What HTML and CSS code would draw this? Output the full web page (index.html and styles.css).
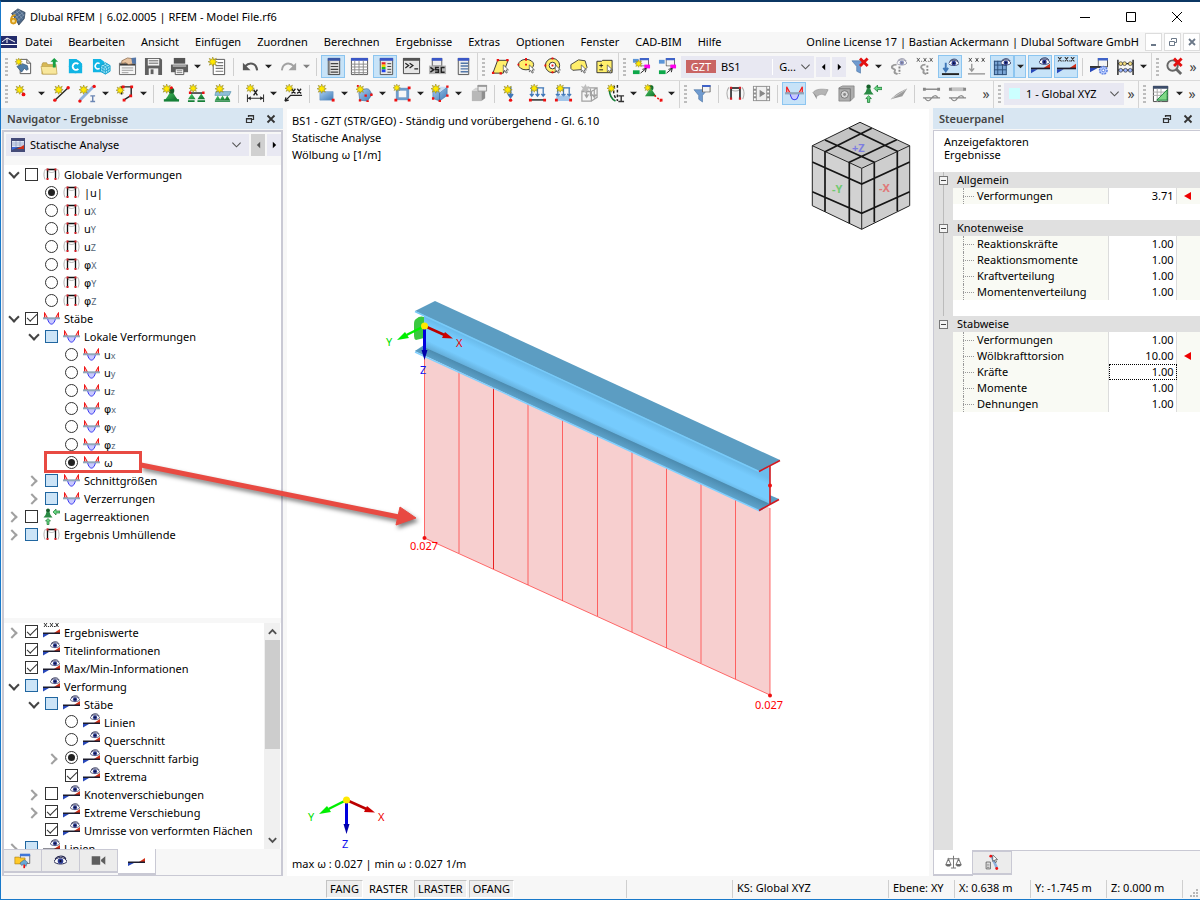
FILE: index.html
```html
<!DOCTYPE html>
<html lang="de">
<head>
<meta charset="utf-8">
<title>Dlubal RFEM | 6.02.0005 | RFEM - Model File.rf6</title>
<link rel="stylesheet" href="styles.css">
</head>
<body>
<svg class="defs" aria-hidden="true">
<defs>
<linearGradient id="blue" x1="0" y1="0" x2="1" y2="1"><stop offset="0" stop-color="#a9cdf0"/><stop offset="1" stop-color="#3f7cb8"/></linearGradient>
<linearGradient id="green" x1="0" y1="0" x2="1" y2="1"><stop offset="0" stop-color="#4fd06a"/><stop offset="1" stop-color="#0c6a27"/></linearGradient>
<linearGradient id="web" gradientUnits="userSpaceOnUse" x1="424" y1="317" x2="410" y2="347"><stop offset="0" stop-color="#6bbcec"/><stop offset=".2" stop-color="#76cbfd"/><stop offset=".6" stop-color="#76cbfd"/><stop offset=".8" stop-color="#65b0dc"/><stop offset="1" stop-color="#4d8cb0"/></linearGradient>
<linearGradient id="flange" gradientUnits="userSpaceOnUse" x1="424" y1="346" x2="419" y2="357"><stop offset="0" stop-color="#4a89ad"/><stop offset="1" stop-color="#62a9d2"/></linearGradient>
</defs>
<symbol id="star" viewBox="0 0 10 10"><path d="M5 0l1 2.800 2.800-1.400L7.400 4.200 10 5 7.400 6 8.700 8.600 6 7.300 5 10 4 7.300 1.300 8.600 2.600 6 0 5l2.600-.8L1.300 1.400 4 2.800z" fill="#ffe800" stroke="#8c7f28" stroke-width=".6"/></symbol>
<symbol id="eye" viewBox="0 0 12 10"><path d="M0 6C2 1 10 1 12 6 10 9 2 9 0 6z" fill="#fff" stroke="#22244e" stroke-width=".9"/><circle cx="6" cy="5.500" r="2.600" fill="#2b3a92"/><circle cx="6" cy="5.500" r="1" fill="#0a0a28"/><path d="M1 3.500C4 0 9 0 11 3.500" fill="none" stroke="#22244e"/></symbol>
<symbol id="cursor" viewBox="0 0 8 11"><path d="M1 0v8.500l2-1.700L4.400 10l1.500-.7L4.600 6.200l2.600-.1z" fill="#fff" stroke="#333" stroke-width=".8"/></symbol>
<symbol id="win" viewBox="0 0 10 9"><path d="M.5.500h9v8h-9z" fill="#f4f4f4" stroke="#555"/><path d="M0 0h10v2.500H0z" fill="#3f63c8"/></symbol>

<symbol id="t-frame" viewBox="0 0 17 17"><path d="M2.500 3C.5 6 .5 10 2 13.500M14.500 3c2 3 2 7 .5 10.500M4.500 5c3 2 5 2 8 0" fill="none" stroke="#aaa" stroke-width=".9"/><path d="M4.500 13V3.500h8V13" fill="none" stroke="#111" stroke-width="1.300"/><path d="M3.500 2.500h2v2h-2zM11.500 2.500h2v2h-2zM3.500 12h2v2h-2zM11.500 12h2v2h-2z" fill="#d11c24"/></symbol>
<symbol id="t-member" viewBox="0 0 17 17"><path d="M1.500 8V2.500L4.500 8zM15.500 8V2.500L12.500 8z" fill="#ffb0b0" stroke="#f01818"/><path d="M4.500 8.500c1.500 7.500 6.500 7.500 8 0z" fill="#c8c8ff" stroke="#3a3af0"/><path d="M0 7.300h17v2H0z" fill="#8fa6bb"/></symbol>
<symbol id="t-react" viewBox="0 0 17 17"><circle cx="5" cy="2.500" r="2" fill="#16602a"/><path d="M3.500 4h3l1 3 2 2.500h-9l2-2.500z" fill="#2a8a44"/><path d="M10 4l3-3v2h4v2h-4v2zM5 10.500l2.500 2.500H6v3.500H4V13H2.500z" fill="#69d884" stroke="#1c7a34" stroke-width=".7"/></symbol>
<symbol id="t-wedge" viewBox="0 0 17 17"><path d="M0 10h6l-6 3z" fill="#2747b8"/><path d="M11 9l6-4v4z" fill="#d22f17"/><path d="M0 8.500h17v1.500H0z" fill="#1c1c2c"/></symbol>
<symbol id="t-eye" viewBox="0 0 17 17"><path d="M0 11h6l-6 3.500z" fill="#2747b8"/><path d="M11 10l6-4v4z" fill="#d22f17"/><path d="M0 9.500h17V11H0z" fill="#1c1c2c"/><use href="#eye" x="7" y="0" width="10" height="8"/></symbol>
<symbol id="t-xxx" viewBox="0 0 17 17"><path d="M0 11h6l-6 3.500z" fill="#2747b8"/><path d="M11 10l6-4v4z" fill="#d22f17"/><path d="M0 9.500h17V11H0z" fill="#1c1c2c"/><path d="M1 0l3 4M4 0L1 4M7 0l3 4M10 0L7 4M12.500 0l3 4M15.500 0l-3 4M5 3.500h1M11 3.500h1" stroke="#333"/></symbol>

<symbol id="i-new" viewBox="0 0 20 20"><path d="M6.500 2.500h7l4 4v11h-11z" fill="#fff" stroke="#555"/><path d="M13.500 2.500v4h4" fill="none" stroke="#555"/><path d="M3 10l6-3 5 2 1 4-2 1-2-2-3 4z" fill="#4f7da8" stroke="#27466a" stroke-width=".6"/><use href="#star" x="1" y="1" width="8" height="8"/></symbol>
<symbol id="i-open" viewBox="0 0 20 20"><path d="M2 8l1-2h4l1 2h9v10H2z" fill="#d8b956" stroke="#a68a36" stroke-width=".6"/><path d="M1 10h16l1 8H3z" fill="#f8e79c" stroke="#b99c45" stroke-width=".6"/><path d="M15 1l4 4h-2.500v6h-3V5H11z" fill="#17a045"/></symbol>
<symbol id="i-center" viewBox="0 0 20 20"><path d="M3 2h8l6 5v10H3z" fill="#11b5e4"/><circle cx="10" cy="10" r="7" fill="#11b5e4"/><path d="M13 7.500a3.500 3.500 0 1 0 0 5" fill="none" stroke="#fff" stroke-width="2"/></symbol>
<symbol id="i-block" viewBox="0 0 20 20"><path d="M1 2h8l4 3v11H1z" fill="#11b5e4"/><path d="M8 7a3 3 0 1 0 0 5" fill="none" stroke="#fff" stroke-width="1.600"/><path d="M14 6l5 3v6l-5 3-5-3V9z" fill="#9be2f6" stroke="#0a9dcc"/><path d="M9 9l5 3 5-3M14 12v6M9 12l5 3 5-3M11.500 7.500l5 3v6M16.500 7.500l-5 3v6" fill="none" stroke="#0a9dcc" stroke-width=".8"/></symbol>
<symbol id="i-props" viewBox="0 0 20 20"><path d="M1.500 6.500h17v12h-17z" fill="#f5f5f5" stroke="#666"/><path d="M2 7h16v2H2z" fill="#3a3a3a"/><path d="M4 11.500h12M4 14h12M4 16.500h7" stroke="#9a9a9a"/><path d="M4 4l6-3 7 1v5l-6 1-3-2-4 1z" fill="#e7c3a0" stroke="#7d5a3c" stroke-width=".7"/><path d="M14 1l5-.5V7l-4 0z" fill="#5577a8"/></symbol>
<symbol id="i-save" viewBox="0 0 20 20"><path d="M1 1h16l2 2v16H1z" fill="#606060"/><path d="M4 2h12v7H4z" fill="#f2f2f2"/><path d="M5 4h10M5 6.500h10" stroke="#606060"/><path d="M5 12h10v7H5z" fill="#f2f2f2"/><path d="M7 13h3v5H7z" fill="#606060"/></symbol>
<symbol id="i-print" viewBox="0 0 20 20"><path d="M4 1h12v6H4z" fill="#555"/><path d="M1 8h18v8H1z" fill="#5e5e5e"/><path d="M5.500 12.500h9v6h-9z" fill="#fff" stroke="#555"/><path d="M7 14.500h6M7 16.500h6" stroke="#777"/><path d="M3 9.500h14" stroke="#e6e6e6"/></symbol>
<symbol id="i-report" viewBox="0 0 20 20"><path d="M5.500 2.500h12v16h-12z" fill="#fff" stroke="#555"/><path d="M10 6h6M8 9h8M8 12h8M8 15h8" stroke="#777" stroke-width="1.300"/><use href="#star" x="0" y="0" width="10" height="10"/></symbol>
<symbol id="i-undo" viewBox="0 0 20 20"><path d="M4 10c5-5 12-4 13 4" fill="none" stroke="#585858" stroke-width="2.200"/><path d="M2 6v8h8z" fill="#585858"/></symbol>
<symbol id="i-redo" viewBox="0 0 20 20"><path d="M16 10C11 5 4 6 3 14" fill="none" stroke="#a2a2a2" stroke-width="2"/><path d="M18 6v8h-8z" fill="#a2a2a2"/></symbol>
<symbol id="i-nav" viewBox="0 0 20 20"><path d="M4.500 1.500h12v17h-12z" fill="#e0e0e0" stroke="#444"/><path d="M4 1h13v3H4z" fill="#3b57a6"/><path d="M7 7h8M7 10h8M7 13h8M7 16h8" stroke="#444" stroke-width="1.300"/><path d="M5 4h1.500v14H5z" fill="#999"/></symbol>
<symbol id="i-table" viewBox="0 0 20 20"><path d="M1.500 1.500h17v17h-17z" fill="#fff" stroke="#555"/><path d="M1 1h18v3H1z" fill="#3b57c6"/><path d="M1 7.500h18M1 10.500h18M1 13.500h18M1 16.500h18M5 4v15M9.500 4v15M14 4v15" stroke="#8a8a8a"/></symbol>
<symbol id="i-panel" viewBox="0 0 20 20"><path d="M4.500 1.500h13v17h-13z" fill="#e6e6e6" stroke="#555"/><path d="M4 1h14v3H4z" fill="#3b57c6"/><path d="M6 5.500h4v2.500H6z" fill="#e22"/><path d="M6 8h4v2.500H6z" fill="#f4d000"/><path d="M6 10.500h4V13H6z" fill="#2b2"/><path d="M6 13h4v3H6z" fill="#24e"/><path d="M12 7h4M12 10h4M12 13h4M12 16h4" stroke="#444"/></symbol>
<symbol id="i-term" viewBox="0 0 20 20"><path d="M1.500 1.500h17v16h-17z" fill="#e5e5e5" stroke="#444"/><path d="M1 1h18v3H1z" fill="#555"/><path d="M3.500 6.500L7 9l-3.500 2.500M8 6.500L11.500 9 8 11.500M13 12.500h4" fill="none" stroke="#222" stroke-width="1.300"/></symbol>
<symbol id="i-sc" viewBox="0 0 20 20"><path d="M4.500 1.500h10v8h-10z" fill="#eee" stroke="#555"/><path d="M4 1h11v3H4z" fill="#3b57c6"/><path d="M1 9h18v9H1z" fill="#b5b5b5"/><path d="M2.500 11l3.500 2.500L2.500 16M11.500 11H8v2.500h3V16H7.500M17.500 11H14v5h3.500" fill="none" stroke="#222" stroke-width="1.500"/></symbol>
<symbol id="i-list" viewBox="0 0 20 20"><path d="M4.500 1.500h11v17h-11z" fill="#eee" stroke="#555"/><path d="M4 1h12v3H4z" fill="#3b57c6"/><path d="M7 6.500h8M7 9.500h8M7 12.500h8M7 15.500h8" stroke="#5276a8" stroke-width="1.500"/></symbol>
<symbol id="i-sel1" viewBox="0 0 20 20"><path d="M7 3.500h11L13 17H2z" fill="#ffef6b" stroke="#333"/><path d="M6 2h2.500v2.500H6zM16 2h2.500v2.500H16zM1 15.500h2.500V18H1zM9 16h2.500v2.500H9z" fill="#e11"/><use href="#cursor" x="12" y="8" width="7" height="10"/></symbol>
<symbol id="i-sel2" viewBox="0 0 20 20"><ellipse cx="9.500" cy="8" rx="8" ry="5.500" fill="#ffef6b" stroke="#333"/><path d="M8.500 1h2v3h-2zM.5 7h2v2h-2zM8.500 7h2v2h-2z" fill="#e11"/><use href="#cursor" x="12" y="8" width="7" height="10"/></symbol>
<symbol id="i-sel3" viewBox="0 0 20 20"><circle cx="10" cy="9" r="7.500" fill="#ffef6b" stroke="#333"/><circle cx="10" cy="9" r="3.500" fill="#fff" stroke="#333"/><path d="M9 8h2v2H9zM9 .5h2v2H9zM1.500 8h2v2h-2zM9 15h2v2H9z" fill="#e11"/><use href="#cursor" x="12" y="8" width="7" height="10"/></symbol>
<symbol id="i-sel4" viewBox="0 0 20 20"><path d="M2 8l8-5 7 1 2 7-2 2-13 1-2-2z" fill="#ffef6b" stroke="#444"/><use href="#cursor" x="12" y="8" width="7" height="10"/></symbol>
<symbol id="i-sel5" viewBox="0 0 20 20"><path d="M2 4.500h5l1-1h10v13H2z" fill="#ffef6b" stroke="#333"/><path d="M4.500 9h4M6.500 7v4M4.500 13.500h4" stroke="#222"/><use href="#cursor" x="12" y="8" width="7" height="10"/></symbol>
<symbol id="i-lc1" viewBox="0 0 20 20"><use href="#win" x="8" y="1" width="10" height="9"/><path d="M1 2h6v4H1z" fill="#5b95d8"/><path d="M1 14h7v4H1z" fill="#0da84a"/><path d="M13 8h6v4h-6z" fill="#f0e"/><path d="M9 17l6-5M15 12l-4 1M15 12l-1 4" stroke="#222"/><use href="#star" x="3" y="3" width="8" height="8"/></symbol>
<symbol id="i-lc2" viewBox="0 0 20 20"><use href="#win" x="8" y="1" width="10" height="9"/><path d="M1 3h6v4H1z" fill="#5b95d8"/><path d="M1 14h7v4H1z" fill="#0da84a"/><path d="M13 8h6v4h-6z" fill="#f0e"/><path d="M9 17l6-5M15 12l-4 1M15 12l-1 4" stroke="#222"/></symbol>
<symbol id="i-filx" viewBox="0 0 20 20"><path d="M1 4h14l-5 6v7l-4-2v-5z" fill="#6f9bd0" stroke="#466f9f" stroke-width=".6"/><path d="M9.500 1.500l8 8M17.500 1.500l-8 8" stroke="#e31010" stroke-width="3"/></symbol>
<symbol id="i-geye" viewBox="0 0 20 20"><g opacity=".55"><use href="#eye" x="8" y="1" width="11" height="9"/></g><path d="M8 8c-5 0-6 3-4 4s3 1 2 3 1 2 3 3" fill="none" stroke="#999" stroke-width="2"/><path d="M11 10v8" stroke="#888" stroke-width="2" stroke-dasharray="2 1.500"/></symbol>
<symbol id="i-gxxx" viewBox="0 0 20 20"><path d="M2 1l3 4M5 1L2 5M9 1l3 4M12 1L9 5M15.500 1l3 4M18.500 1l-3 4M6.500 4.500h1M13.500 4.500h1" stroke="#555"/><path d="M11 8c-5 0-5 3-4 4s3 1 2 3 1 2 3 3" fill="none" stroke="#999" stroke-width="2"/><path d="M13 9v9" stroke="#888" stroke-width="2" stroke-dasharray="2 1.500"/></symbol>
<symbol id="i-loade" viewBox="0 0 20 20"><path d="M5 6v8M2.500 11.500L5 15l2.500-3.500" fill="none" stroke="#3f77b8" stroke-width="2"/><path d="M1 17h18v2H1z" fill="#222"/><use href="#eye" x="8" y="1" width="11" height="10"/></symbol>
<symbol id="i-loadx" viewBox="0 0 20 20"><path d="M2 1l3 4M5 1L2 5M9 1l3 4M12 1L9 5M15.500 1l3 4M18.500 1l-3 4" stroke="#444"/><path d="M5 7v8M2.500 12L5 15l2.500-3" fill="none" stroke="#999" stroke-width="1.500"/><path d="M1 17h18v1.500H1z" fill="#999"/></symbol>
<symbol id="i-grid" viewBox="0 0 20 20"><path d="M1 4h13v15H1z" fill="#7aa5d5"/><path d="M1 8.500h13M1 13.500h13M5 4v15M10 4v15M1 4.500h13M1.500 4v15M14 4v15M1 18.500h13" stroke="#2c4f7a"/><use href="#eye" x="8" y="1" width="11" height="9"/></symbol>
<symbol id="i-res" viewBox="0 0 20 20"><use href="#win" x="8" y="1" width="11" height="10"/><path d="M0 11h9l-9 5z" fill="#2747b8"/><path d="M0 9.500h12v2H0z" fill="#333"/><circle cx="14" cy="14" r="4" fill="#b8ccff" stroke="#5a7ee0" stroke-width="1.500" stroke-dasharray="2 1"/><circle cx="14" cy="14" r="1.500" fill="#fff" stroke="#5a7ee0"/></symbol>
<symbol id="i-abacus" viewBox="0 0 20 20"><path d="M2 3v16M18 3v16M2 7h16M2 14h16" stroke="#222" stroke-width="1.500"/><g fill="#f4dd80" stroke="#333" stroke-width=".7"><circle cx="5" cy="7" r="2"/><circle cx="9" cy="7" r="2"/><circle cx="15" cy="7" r="2"/></g><g fill="#9ab4ff" stroke="#333" stroke-width=".7"><circle cx="5" cy="14" r="2"/><circle cx="10" cy="14" r="2"/><circle cx="15" cy="14" r="2"/></g></symbol>
<symbol id="i-findx" viewBox="0 0 20 20"><circle cx="8" cy="9" r="5.500" fill="#ececec" stroke="#666" stroke-width="2"/><path d="M12 13l5 5" stroke="#666" stroke-width="3"/><path d="M9.500 1.500l8 8M17.500 1.500l-8 8" stroke="#e31010" stroke-width="3"/></symbol>

<symbol id="i-node" viewBox="0 0 20 20"><use href="#star" x="1" y="1" width="10" height="10"/><circle cx="10" cy="11" r="2" fill="#e11"/></symbol>
<symbol id="i-line" viewBox="0 0 20 20"><path d="M3 17L17 4" stroke="#222" stroke-width="1.500"/><use href="#star" x="2" y="1" width="10" height="10"/><circle cx="17" cy="4" r="1.800" fill="#e11"/><circle cx="3" cy="17" r="1.800" fill="#e11"/></symbol>
<symbol id="i-member" viewBox="0 0 20 20"><path d="M2 17L16 3" stroke="#8fb2dd" stroke-width="3"/><path d="M13 12.500h5M15.500 12.500v6M13 18.500h5" stroke="#6b86b4" stroke-width="1.500"/><use href="#star" x="1" y="1" width="10" height="10"/><circle cx="17" cy="2.500" r="1.800" fill="#e11"/><circle cx="2" cy="18" r="1.800" fill="#e11"/></symbol>
<symbol id="i-poly" viewBox="0 0 20 20"><path d="M8 17l8-5V3H6v8" fill="none" stroke="#222" stroke-width="1.500"/><use href="#star" x="0" y="2" width="9" height="9"/><path d="M6 1.500h3v3H6zM15 1.500h3v3h-3zM14 11h3v3h-3zM7 15.500h3v3H7z" fill="#e11"/></symbol>
<symbol id="i-nsup" viewBox="0 0 20 20"><path d="M11 6l4 7 3 4H4l3-4z" fill="url(#green)"/><path d="M3 16h16v2.500H3z" fill="#168038"/><circle cx="11" cy="7" r="3" fill="#16602a"/><use href="#star" x="1" y="0" width="10" height="10"/><circle cx="11" cy="4" r="1.600" fill="#e11"/></symbol>
<symbol id="i-lsup" viewBox="0 0 20 20"><path d="M5 10l4 6H1zM15 10l4 6h-8z" fill="url(#green)"/><path d="M1 17h7v2H1zM11 17h8v2h-8z" fill="#168038"/><path d="M3 9.500h14" stroke="#222" stroke-width="1.500"/><use href="#star" x="2" y="0" width="9" height="9"/><path d="M2 8h2.500v2.500H2zM16 8h2.500v2.500H16z" fill="#e11"/></symbol>
<symbol id="i-ssup" viewBox="0 0 20 20"><path d="M3 8h16l-2 4H2z" fill="#8fc0d8" stroke="#4a8aa8" stroke-width=".6"/><path d="M5 12l3 5H2zM10 12l3 5H7zM15 12l3 5h-6z" fill="url(#green)"/><path d="M2 18h16" stroke="#168038" stroke-width="1.500"/><use href="#star" x="2" y="0" width="10" height="10"/></symbol>
<symbol id="i-dim" viewBox="0 0 20 20"><path d="M1.500 11v8M18.500 11v8M2 15h16" stroke="#222"/><path d="M2 15l3-2v4zM18 15l-3-2v4z" fill="#222"/><path d="M8 6l4 6M12 6l-4 6" stroke="#222" stroke-width="1.500"/><use href="#star" x="0" y="0" width="9" height="9"/></symbol>
<symbol id="i-dimxx" viewBox="0 0 20 20"><path d="M1 18l6-6h12M1 18l1-4M1 18l4-1" stroke="#222" fill="none" stroke-width="1.300"/><path d="M8 5l4 5M12 5l-4 5M14 5l4 5M18 5l-4 5" stroke="#222" stroke-width="1.300"/><use href="#star" x="1" y="0" width="9" height="9"/></symbol>
<symbol id="i-surf" viewBox="0 0 20 20"><path d="M3 8h14v9H3z" fill="url(#blue)" stroke="#6a95c4" stroke-width=".6"/><use href="#star" x="0" y="0" width="10" height="10"/><path d="M15.500 15.500h3v3h-3z" fill="#e11"/></symbol>
<symbol id="i-surf2" viewBox="0 0 20 20"><path d="M4 9c4-4 9-5 11-3l3 5-5 7-8-1z" fill="url(#blue)" stroke="#34608f" stroke-width=".6"/><use href="#star" x="1" y="1" width="9" height="9"/><path d="M2 1h2v2H2zM10 11h2.500v2.500H10zM16 10h2.500v2.500H16zM4 16h2.500v2.500H4zM12 17h2.500v2H12z" fill="#e11"/></symbol>
<symbol id="i-open2" viewBox="0 0 20 20"><path d="M3 4h14v13H3z" fill="#6e9ccb"/><path d="M6 7h8v7H6z" fill="#f7f7f7"/><path d="M15.500 2.500h3v3h-3zM15.500 15.500h3v3h-3zM1.500 15.500h3v3h-3z" fill="#e11"/><use href="#star" x="0" y="0" width="8" height="8"/></symbol>
<symbol id="i-solid" viewBox="0 0 20 20"><path d="M2 6l7 3v9l-7-3zM9 9l8-6v9l-8 6z" fill="url(#blue)" stroke="#3b6ea5" stroke-width=".6"/><path d="M2 6l8-3h7L9 9z" fill="#c9dff5"/><use href="#star" x="0" y="0" width="10" height="10"/><path d="M8 16.500h2.500V19H8zM1 14h2.500v2.500H1zM16 11h2.500v2.500H16zM16 1.500h2.500V4H16z" fill="#e11"/></symbol>
<symbol id="i-gcube" viewBox="0 0 20 20"><path d="M3 7h10v11H3z" fill="#b8b8b8"/><path d="M13 7l4-3v11l-4 3z" fill="#8e8e8e"/><path d="M3 7l4-3h10l-4 3z" fill="#d2d2d2"/><path d="M9.500 1.500h9v6h-9z" fill="#ececec" stroke="#999"/><path d="M9 1h10v2H9z" fill="#999"/></symbol>
<symbol id="i-nload" viewBox="0 0 20 20"><path d="M9 3v10M6.500 10.500L9 14l2.500-3.500" fill="none" stroke="#3f77b8" stroke-width="2"/><use href="#star" x="1" y="1" width="10" height="10"/><circle cx="9" cy="17" r="1.800" fill="#e11"/></symbol>
<symbol id="i-mload" viewBox="0 0 20 20"><path d="M3 4h14M4 4v9M10 4v9M16 4v9M2 10.500L4 13l2-2.500M8 10.500l2 2.500 2-2.500M14 10.500l2 2.500 2-2.500" fill="none" stroke="#3f77b8" stroke-width="1.300"/><path d="M2 16h16v1.500H2z" fill="#222"/><path d="M1 15.500h3v3H1zM16 15.500h3v3h-3z" fill="#e11"/><use href="#star" x="2" y="0" width="9" height="9"/></symbol>
<symbol id="i-sload" viewBox="0 0 20 20"><path d="M3 4h14M4 4v9M10 4v9M16 4v9M2 10.500L4 13l2-2.500M8 10.500l2 2.500 2-2.500M14 10.500l2 2.500 2-2.500" fill="none" stroke="#3f77b8" stroke-width="1.300"/><path d="M3 12h13l2 6H1z" fill="#8db9e6" opacity=".8"/><path d="M1 15.500h3v3H1zM16 15.500h3v3h-3z" fill="#e11"/><use href="#star" x="2" y="0" width="9" height="9"/></symbol>
<symbol id="i-gload" viewBox="0 0 20 20"><path d="M2 8h10v10H2zM2 8l5-4h11v10l-6 4M12 8l6-4M7 5v8M11 5v8M15 5v8M5 11l2 3 2-3M13 11l2 3 2-3" fill="none" stroke="#a2a2a2" stroke-width="1.300"/><path d="M6 0l1 3 3-1-2 3 2 2-3 0-1 3-2-3-3 0 2-2-2-3 3 1z" fill="#bdbdbd"/></symbol>
<symbol id="i-imp" viewBox="0 0 20 20"><path d="M4 5c-1 6 2 11 6 13" fill="none" stroke="#168038" stroke-width="1.800"/><path d="M9 2c-2 5-1 11 3 15M12 1v17" fill="none" stroke="#222" stroke-width="1.500" stroke-dasharray="3 2"/><path d="M13 12.500h6M16 12.500v6M13 18.500h6" stroke="#333" stroke-width="1.500"/><use href="#star" x="1" y="0" width="9" height="9"/></symbol>
<symbol id="i-free" viewBox="0 0 20 20"><circle cx="7" cy="4" r="3" fill="#16702e"/><path d="M7 4l4 6 2 3H1l2-3z" fill="url(#green)"/><path d="M11 12l7 6" stroke="#e11" stroke-width="1.500" stroke-dasharray="2 2"/><path d="M16.500 15.500h3v3h-3z" fill="#e11"/><use href="#star" x="0" y="0" width="8" height="8"/></symbol>
<symbol id="i-filw" viewBox="0 0 20 20"><path d="M1 6h14l-5 6v7l-4-3v-4z" fill="#6f9bd0" stroke="#466f9f" stroke-width=".6"/><use href="#win" x="9" y="1" width="10" height="8"/></symbol>
<symbol id="i-film" viewBox="0 0 20 20"><path d="M1 2h18v16H1z" fill="#8f8f8f"/><path d="M5 3h10v14H5z" fill="#f0f0f0"/><path d="M8 6l6 4-6 4z" fill="#888"/><path d="M3 3v14M17 3v14" stroke="#fff" stroke-width="2" stroke-dasharray="2 2"/></symbol>
<symbol id="i-gsurf" viewBox="0 0 20 20"><path d="M2 9c3-4 9-4 16-3l-3 6c-4-2-6-1-9 1z" fill="#b4b4b4" stroke="#888" stroke-width=".6"/><path d="M2 9l4 4v3z" fill="#888"/></symbol>
<symbol id="i-gsolid" viewBox="0 0 20 20"><path d="M2 4l4-2h12v12l-4 4H2z" fill="#adadad" stroke="#777" stroke-width=".7"/><path d="M2 5h12v13" fill="none" stroke="#777"/><circle cx="8" cy="11" r="4" fill="#d8d8d8" stroke="#777"/><circle cx="8" cy="11" r="1.500" fill="#888"/></symbol>
<symbol id="i-gwing" viewBox="0 0 20 20"><path d="M2 16c5-5 9-8 17-11l-5 8z" fill="#9a9a9a"/><path d="M2 16L19 5" stroke="#c9c9c9"/></symbol>
<symbol id="i-wave1" viewBox="0 0 20 20"><path d="M2 5.500h16" stroke="#888" stroke-width="1.500"/><path d="M1 4h3v3H1zM16 4h3v3h-3z" fill="#888"/><path d="M1 14.500h18M3 15c3 4 5 3 7 0s5-4 7 0" fill="none" stroke="#888" stroke-width="1.300"/></symbol>
<symbol id="i-wave2" viewBox="0 0 20 20"><path d="M3 3.500h14v4H3z" fill="#c4c4c4"/><path d="M1 4h3v3H1zM16 4h3v3h-3z" fill="#888"/><path d="M1 14.500h18M3 15c3 4 5 3 7 0s5-4 7 0" fill="none" stroke="#888" stroke-width="1.300"/></symbol>
<symbol id="i-scale" viewBox="0 0 20 20"><path d="M1.500 2.500h15v16h-15z" fill="#fff" stroke="#444"/><path d="M1 2h16v3H1z" fill="#3c4d6a"/><path d="M1 8.500h16M1 12h16M5.500 5v14M9.500 5v14" stroke="#aaa"/><path d="M16 6v11H5z" fill="#7fd886" stroke="#168038"/></symbol>
<symbol id="i-balance" viewBox="0 0 20 20"><path d="M10 2v14M3 5.500h14M7 16.500h6M4 5.500l-3 7h6zM16 5.500l-3 7h6z" fill="none" stroke="#777" stroke-width="1.200"/><path d="M1 12.500h6c0 3-6 3-6 0zM13 12.500h6c0 3-6 3-6 0z" fill="#666"/></symbol>
<symbol id="i-pick" viewBox="0 0 20 20"><path d="M9 3l6 13" stroke="#8fb2dd" stroke-width="3"/><path d="M2.500 9.500h5v8h-5z" fill="#fff" stroke="#555"/><path d="M3.500 12h3M3.500 14h3M3.500 16h3" stroke="#777"/><circle cx="8" cy="2.500" r="1.700" fill="#e11"/><circle cx="15" cy="17" r="1.700" fill="#e11"/><use href="#cursor" x="9" y="1" width="8" height="10"/></symbol>
<symbol id="i-cam" viewBox="0 0 20 20"><path d="M2 5h10v10H2zM13 9l5-4v10l-5-4z" fill="#5e5e5e"/></symbol>
<symbol id="i-data" viewBox="0 0 20 20"><path d="M7.500 3.500h11v10h-11z" fill="#eee" stroke="#666"/><path d="M7 2h12v3H7z" fill="#3f76d8"/><path d="M1 6h5l1 1h6v7H1z" fill="#ffc928" stroke="#a57a12" stroke-width=".7"/><path d="M7 13l5-4 4 3-2 5-2-3-3 2z" fill="#68a8d8" stroke="#27466a" stroke-width=".5"/><path d="M11 15h2v4h-2z" fill="#e11"/></symbol>
<symbol id="i-logo" viewBox="0 0 20 20"><path d="M4 6l7-5 8 4-1 7-6 7-3-6z" fill="#4d6888" stroke="#26384f" stroke-width=".8"/><path d="M6 5l7 9M9 3l7 9M12 2l6 7M4 9l9-6M7 12l10-7M10 15l8-8" stroke="#a9bccf" stroke-width=".5"/><circle cx="6" cy="14.500" r="2.700" fill="#f8e29a" stroke="#d79a16" stroke-width="2"/><path d="M3.300 14c0-4 2-6 5-6" fill="none" stroke="#d79a16" stroke-width="2"/></symbol>
<symbol id="down" viewBox="0 0 8 5"><path d="M0 .5h8l-4 4z" fill="#222"/></symbol>
<symbol id="chev" viewBox="0 0 12 8"><path d="M1.500 1.500L6 6l4.500-4.500" fill="none" stroke="#555" stroke-width="1.200"/></symbol>
<symbol id="restore" viewBox="0 0 10 10"><path d="M3.500 3V1.500h5v4H7M1.500 4.500h5v4h-5z" fill="none" stroke="#333" stroke-width="1.200"/><path d="M3 1h6v1.500H3zM1 4h6v1.500H1z" fill="#333"/></symbol>
<symbol id="close" viewBox="0 0 10 10"><path d="M1.500 1.500l7 7M8.500 1.500l-7 7" stroke="#333" stroke-width="1.800"/></symbol>
<symbol id="left" viewBox="0 0 6 8"><path d="M5 0v8L1 4z" fill="currentColor"/></symbol>
<symbol id="right" viewBox="0 0 6 8"><path d="M1 0v8l4-4z" fill="currentColor"/></symbol>
</svg>

<div class="window">
<header class="titlebar">
  <svg class="logo"><use href="#i-logo"/></svg>
  <h1>Dlubal RFEM | 6.02.0005 | RFEM - Model File.rf6</h1>
  <div class="winbtns">
    <button aria-label="Minimieren"><svg viewBox="0 0 12 12"><path d="M1 6.500h10" stroke="#000"/></svg></button>
    <button aria-label="Maximieren"><svg viewBox="0 0 12 12"><path d="M1.500 1.500h9v9h-9z" fill="none" stroke="#000"/></svg></button>
    <button aria-label="Beenden"><svg viewBox="0 0 12 12"><path d="M1 1l10 10M11 1L1 11" stroke="#000"/></svg></button>
  </div>
</header>

<nav class="menubar">
  <svg class="mdi" viewBox="0 0 16 12"><path d="M0 0h16v12H0z" fill="#242c6c"/><path d="M0 8.500h16M1 6l5-4 8 4M6 2v5" stroke="#fff" fill="none"/></svg>
  <button>Datei</button><button>Bearbeiten</button><button>Ansicht</button><button>Einfügen</button><button>Zuordnen</button><button>Berechnen</button><button>Ergebnisse</button><button>Extras</button><button>Optionen</button><button>Fenster</button><button>CAD-BIM</button><button>Hilfe</button>
  <span class="license">Online License 17 | Bastian Ackermann | Dlubal Software GmbH</span>
  <div class="mdibtns">
    <button aria-label="Fenster minimieren"><svg viewBox="0 0 10 10"><path d="M2 8h5" stroke="#6b7888" stroke-width="2"/></svg></button>
    <button aria-label="Fenster wiederherstellen"><svg viewBox="0 0 10 10"><path d="M3.500 3V1.500h5v4H7M1.500 4.500h5v4h-5z" fill="none" stroke="#6b7888"/></svg></button>
    <button aria-label="Fenster schließen"><svg viewBox="0 0 10 10"><path d="M2 2l6 6M8 2L2 8" stroke="#6b7888" stroke-width="1.800"/></svg></button>
  </div>
</nav>

<div class="toolbar" role="toolbar" aria-label="Standard">
  <i class="grip"></i>
  <button class="tb" aria-label="Neu"><svg><use href="#i-new"/></svg></button>
  <button class="tb" aria-label="Öffnen"><svg><use href="#i-open"/></svg></button>
  <button class="tb" aria-label="Dlubal Center"><svg><use href="#i-center"/></svg></button>
  <button class="tb" aria-label="Blöcke"><svg><use href="#i-block"/></svg></button>
  <button class="tb" aria-label="Eigenschaften"><svg><use href="#i-props"/></svg></button>
  <button class="tb" aria-label="Speichern"><svg><use href="#i-save"/></svg></button>
  <button class="tb" aria-label="Drucken"><svg><use href="#i-print"/></svg></button>
  <button class="dd" aria-label="Mehr"><svg><use href="#down"/></svg></button>
  <button class="tb" aria-label="Ausdruckprotokoll"><svg><use href="#i-report"/></svg></button>
  <i class="sep"></i>
  <button class="tb" aria-label="Rückgängig"><svg><use href="#i-undo"/></svg></button>
  <button class="dd" aria-label="Mehr"><svg><use href="#down"/></svg></button>
  <button class="tb" aria-label="Wiederholen"><svg><use href="#i-redo"/></svg></button>
  <button class="dd off" aria-label="Mehr"><svg><use href="#down"/></svg></button>
  <i class="sep"></i>
  <button class="tb on" aria-label="Navigator"><svg><use href="#i-nav"/></svg></button>
  <button class="tb" aria-label="Tabellen"><svg><use href="#i-table"/></svg></button>
  <button class="tb on" aria-label="Steuerpanel"><svg><use href="#i-panel"/></svg></button>
  <button class="tb" aria-label="Konsole"><svg><use href="#i-term"/></svg></button>
  <button class="tb" aria-label="Skript"><svg><use href="#i-sc"/></svg></button>
  <button class="tb" aria-label="Liste"><svg><use href="#i-list"/></svg></button>
  <i class="line"></i><i class="grip"></i>
  <button class="tb" aria-label="Auswahl Parallelogramm"><svg><use href="#i-sel1"/></svg></button>
  <button class="tb" aria-label="Auswahl Ellipse"><svg><use href="#i-sel2"/></svg></button>
  <button class="tb" aria-label="Auswahl Ring"><svg><use href="#i-sel3"/></svg></button>
  <button class="tb" aria-label="Auswahl frei"><svg><use href="#i-sel4"/></svg></button>
  <button class="tb" aria-label="Auswahl speziell"><svg><use href="#i-sel5"/></svg></button>
  <i class="line"></i><i class="grip"></i>
  <button class="tb" aria-label="Neuer Lastfall"><svg><use href="#i-lc1"/></svg></button>
  <button class="tb" aria-label="Lastfälle"><svg><use href="#i-lc2"/></svg></button>
  <button class="combo lc"><span class="tag">GZT</span><span class="grow">BS1</span><i class="split"></i><span>G...</span><svg class="chev"><use href="#chev"/></svg></button>
  <button class="step" aria-label="Vorheriger Lastfall"><svg><use href="#left"/></svg></button>
  <button class="step" aria-label="Nächster Lastfall"><svg><use href="#right"/></svg></button>
  <button class="tb" aria-label="Filter löschen"><svg><use href="#i-filx"/></svg></button>
  <button class="dd" aria-label="Mehr"><svg><use href="#down"/></svg></button>
  <button class="tb" aria-label="Ergebnisse ausblenden"><svg><use href="#i-geye"/></svg></button>
  <button class="tb" aria-label="Werte ausblenden"><svg><use href="#i-gxxx"/></svg></button>
  <button class="tb on" aria-label="Lasten anzeigen"><svg><use href="#i-loade"/></svg></button>
  <button class="tb" aria-label="Lastwerte"><svg><use href="#i-loadx"/></svg></button>
  <button class="tb on" aria-label="Raster anzeigen"><svg><use href="#i-grid"/></svg></button>
  <button class="dd on" aria-label="Mehr"><svg><use href="#down"/></svg></button>
  <button class="tb on" aria-label="Ergebnisse anzeigen"><svg><use href="#t-eye"/></svg></button>
  <button class="tb on" aria-label="Ergebniswerte anzeigen"><svg><use href="#t-xxx"/></svg></button>
  <i class="sep"></i>
  <button class="tb" aria-label="Ergebniseinstellungen"><svg><use href="#i-res"/></svg></button>
  <button class="tb" aria-label="Berechnen"><svg><use href="#i-abacus"/></svg></button>
  <button class="dd" aria-label="Mehr"><svg><use href="#down"/></svg></button>
  <i class="line"></i><i class="grip"></i>
  <button class="tb" aria-label="Suche löschen"><svg><use href="#i-findx"/></svg></button>
  <button class="more">»</button>
</div>

<div class="toolbar second" role="toolbar" aria-label="Modell">
  <i class="grip"></i>
  <button class="tb" aria-label="Knoten"><svg><use href="#i-node"/></svg></button>
  <button class="dd" aria-label="Mehr"><svg><use href="#down"/></svg></button>
  <button class="tb" aria-label="Linie"><svg><use href="#i-line"/></svg></button>
  <button class="tb" aria-label="Stab"><svg><use href="#i-member"/></svg></button>
  <button class="dd" aria-label="Mehr"><svg><use href="#down"/></svg></button>
  <button class="tb" aria-label="Polylinie"><svg><use href="#i-poly"/></svg></button>
  <button class="dd" aria-label="Mehr"><svg><use href="#down"/></svg></button>
  <i class="sep"></i>
  <button class="tb" aria-label="Knotenlager"><svg><use href="#i-nsup"/></svg></button>
  <button class="tb" aria-label="Linienlager"><svg><use href="#i-lsup"/></svg></button>
  <button class="tb" aria-label="Flächenlager"><svg><use href="#i-ssup"/></svg></button>
  <i class="sep"></i>
  <button class="tb" aria-label="Bemaßung"><svg><use href="#i-dim"/></svg></button>
  <button class="dd" aria-label="Mehr"><svg><use href="#down"/></svg></button>
  <button class="tb" aria-label="Höhenkote"><svg><use href="#i-dimxx"/></svg></button>
  <i class="sep"></i>
  <button class="tb" aria-label="Fläche"><svg><use href="#i-surf"/></svg></button>
  <button class="dd" aria-label="Mehr"><svg><use href="#down"/></svg></button>
  <button class="tb" aria-label="Gekrümmte Fläche"><svg><use href="#i-surf2"/></svg></button>
  <button class="dd" aria-label="Mehr"><svg><use href="#down"/></svg></button>
  <button class="tb" aria-label="Öffnung"><svg><use href="#i-open2"/></svg></button>
  <button class="dd" aria-label="Mehr"><svg><use href="#down"/></svg></button>
  <button class="tb" aria-label="Volumenkörper"><svg><use href="#i-solid"/></svg></button>
  <button class="dd" aria-label="Mehr"><svg><use href="#down"/></svg></button>
  <button class="tb" aria-label="Block"><svg><use href="#i-gcube"/></svg></button>
  <i class="sep"></i>
  <button class="tb" aria-label="Knotenlast"><svg><use href="#i-nload"/></svg></button>
  <button class="tb" aria-label="Stablast"><svg><use href="#i-mload"/></svg></button>
  <button class="tb" aria-label="Flächenlast"><svg><use href="#i-sload"/></svg></button>
  <button class="tb" aria-label="Volumenlast"><svg><use href="#i-gload"/></svg></button>
  <button class="tb" aria-label="Imperfektion"><svg><use href="#i-imp"/></svg></button>
  <button class="dd" aria-label="Mehr"><svg><use href="#down"/></svg></button>
  <button class="tb" aria-label="Knotenverformung"><svg><use href="#i-free"/></svg></button>
  <button class="dd" aria-label="Mehr"><svg><use href="#down"/></svg></button>
  <i class="line"></i><i class="grip"></i>
  <button class="tb" aria-label="Filter"><svg><use href="#i-filw"/></svg></button>
  <i class="sep"></i>
  <button class="tb" aria-label="Verformungen"><svg><use href="#t-frame"/></svg></button>
  <button class="tb" aria-label="Animation"><svg><use href="#i-film"/></svg></button>
  <i class="sep"></i>
  <button class="tb on" aria-label="Stabergebnisse"><svg><use href="#t-member"/></svg></button>
  <button class="tb" aria-label="Flächenergebnisse"><svg><use href="#i-gsurf"/></svg></button>
  <button class="tb" aria-label="Volumenergebnisse"><svg><use href="#i-gsolid"/></svg></button>
  <button class="tb" aria-label="Lagerreaktionen"><svg><use href="#t-react"/></svg></button>
  <button class="tb" aria-label="Schnitte"><svg><use href="#i-gwing"/></svg></button>
  <i class="sep"></i>
  <button class="tb" aria-label="Verlauf"><svg><use href="#i-wave1"/></svg></button>
  <button class="tb" aria-label="Verlauf Stab"><svg><use href="#i-wave2"/></svg></button>
  <button class="more gap">»</button>
  <i class="line"></i><i class="grip"></i>
  <button class="combo cs"><i class="swatch"></i><span class="grow">1 - Global XYZ</span><svg class="chev"><use href="#chev"/></svg></button>
  <button class="more">»</button>
  <i class="line"></i><i class="grip"></i>
  <button class="tb" aria-label="Arbeitsebene"><svg><use href="#i-scale"/></svg></button>
  <button class="dd" aria-label="Mehr"><svg><use href="#down"/></svg></button>
  <button class="more">»</button>
</div>

<main class="main">
<aside class="navigator">
  <div class="dockhead"><h2>Navigator - Ergebnisse</h2><button aria-label="Abdocken"><svg><use href="#restore"/></svg></button><button aria-label="Schließen"><svg><use href="#close"/></svg></button></div>
  <div class="navbox">
    <div class="picker">
      <button class="combo wide"><svg class="picon" viewBox="0 0 14 14"><path d="M0 0h14v14H0z" fill="#444b78"/><path d="M1 3h12v6H1z" fill="#dfe6f4"/><path d="M1 5h12M1 7h12M5 3v6M9 3v6" stroke="#8a9ac0" stroke-width=".7"/><path d="M1 9h6l-6 3z" fill="#3a66d8"/><path d="M6 11l7-4v4z" fill="#d22f17"/></svg><span class="grow">Statische Analyse</span><svg class="chev"><use href="#chev"/></svg></button>
      <button class="step grey" aria-label="Zurück"><svg><use href="#left"/></svg></button>
      <button class="step" aria-label="Weiter"><svg><use href="#right"/></svg></button>
    </div>
    <ul class="tree upper">
      <li class="open"><label><input type="checkbox"><svg><use href="#t-frame"/></svg><span>Globale Verformungen</span></label></li>
      <li class="d1"><label><input type="radio" name="g" checked><svg><use href="#t-frame"/></svg><span>|u|</span></label></li>
      <li class="d1"><label><input type="radio" name="g"><svg><use href="#t-frame"/></svg><span>u<small>X</small></span></label></li>
      <li class="d1"><label><input type="radio" name="g"><svg><use href="#t-frame"/></svg><span>u<small>Y</small></span></label></li>
      <li class="d1"><label><input type="radio" name="g"><svg><use href="#t-frame"/></svg><span>u<small>Z</small></span></label></li>
      <li class="d1"><label><input type="radio" name="g"><svg><use href="#t-frame"/></svg><span><b>φ</b><small>X</small></span></label></li>
      <li class="d1"><label><input type="radio" name="g"><svg><use href="#t-frame"/></svg><span><b>φ</b><small>Y</small></span></label></li>
      <li class="d1"><label><input type="radio" name="g"><svg><use href="#t-frame"/></svg><span><b>φ</b><small>Z</small></span></label></li>
      <li class="open"><label><input type="checkbox" checked><svg><use href="#t-member"/></svg><span>Stäbe</span></label></li>
      <li class="d1 open"><label><input type="checkbox" class="part"><svg><use href="#t-member"/></svg><span>Lokale Verformungen</span></label></li>
      <li class="d2"><label><input type="radio" name="l"><svg><use href="#t-member"/></svg><span>u<small>x</small></span></label></li>
      <li class="d2"><label><input type="radio" name="l"><svg><use href="#t-member"/></svg><span>u<small>y</small></span></label></li>
      <li class="d2"><label><input type="radio" name="l"><svg><use href="#t-member"/></svg><span>u<small>z</small></span></label></li>
      <li class="d2"><label><input type="radio" name="l"><svg><use href="#t-member"/></svg><span><b>φ</b><small>x</small></span></label></li>
      <li class="d2"><label><input type="radio" name="l"><svg><use href="#t-member"/></svg><span><b>φ</b><small>y</small></span></label></li>
      <li class="d2"><label><input type="radio" name="l"><svg><use href="#t-member"/></svg><span><b>φ</b><small>z</small></span></label></li>
      <li class="d2"><label><input type="radio" name="l" checked><svg><use href="#t-member"/></svg><span>ω</span></label></li>
      <li class="d1 shut"><label><input type="checkbox" class="part"><svg><use href="#t-member"/></svg><span>Schnittgrößen</span></label></li>
      <li class="d1 shut"><label><input type="checkbox" class="part"><svg><use href="#t-member"/></svg><span>Verzerrungen</span></label></li>
      <li class="shut"><label><input type="checkbox"><svg><use href="#t-react"/></svg><span>Lagerreaktionen</span></label></li>
      <li class="shut"><label><input type="checkbox" class="part"><svg><use href="#t-frame"/></svg><span>Ergebnis Umhüllende</span></label></li>
    </ul>
    <div class="lowerwrap">
      <ul class="tree lower">
        <li class="shut"><label><input type="checkbox" checked><svg><use href="#t-xxx"/></svg><span>Ergebniswerte</span></label></li>
        <li><label><input type="checkbox" checked><svg><use href="#t-eye"/></svg><span>Titelinformationen</span></label></li>
        <li><label><input type="checkbox" checked><svg><use href="#t-eye"/></svg><span>Max/Min-Informationen</span></label></li>
        <li class="open"><label><input type="checkbox" class="part"><svg><use href="#t-eye"/></svg><span>Verformung</span></label></li>
        <li class="d1 open"><label><input type="checkbox" class="part"><svg><use href="#t-eye"/></svg><span>Stäbe</span></label></li>
        <li class="d2"><label><input type="radio" name="q"><svg><use href="#t-eye"/></svg><span>Linien</span></label></li>
        <li class="d2"><label><input type="radio" name="q"><svg><use href="#t-eye"/></svg><span>Querschnitt</span></label></li>
        <li class="d2 shut"><label><input type="radio" name="q" checked><svg><use href="#t-eye"/></svg><span>Querschnitt farbig</span></label></li>
        <li class="d2"><label><input type="checkbox" checked><svg><use href="#t-eye"/></svg><span>Extrema</span></label></li>
        <li class="d1 shut"><label><input type="checkbox"><svg><use href="#t-eye"/></svg><span>Knotenverschiebungen</span></label></li>
        <li class="d1 shut"><label><input type="checkbox" checked><svg><use href="#t-eye"/></svg><span>Extreme Verschiebung</span></label></li>
        <li class="d1"><label><input type="checkbox" checked><svg><use href="#t-eye"/></svg><span>Umrisse von verformten Flächen</span></label></li>
        <li class="shut"><label><input type="checkbox" class="part"><svg><use href="#t-eye"/></svg><span>Linien</span></label></li>
      </ul>
      <div class="scroll"><svg viewBox="0 0 12 8"><path d="M2 6l4-4 4 4" fill="none" stroke="#505050" stroke-width="2"/></svg><i class="thumb"></i><svg viewBox="0 0 12 8"><path d="M2 2l4 4 4-4" fill="none" stroke="#505050" stroke-width="2"/></svg></div>
    </div>
    <div class="tabs">
      <button aria-label="Daten"><svg><use href="#i-data"/></svg></button>
      <button aria-label="Zeigen"><svg class="eyeicon"><use href="#eye"/></svg></button>
      <button aria-label="Ansichten"><svg><use href="#i-cam"/></svg></button>
      <button class="sel" aria-label="Ergebnisse"><svg><use href="#t-wedge"/></svg></button>
    </div>
  </div>
</aside>

<section class="view" aria-label="Modell">
  <svg class="scene" viewBox="287 109 642 767" preserveAspectRatio="xMidYMid meet">
    <path d="M424.500 356L770 508V695L424.500 538z" fill="#f7cfcf"/>
    <path d="M424.500 356V538L770 695V508M459 365v188M528 400v185M562.500 410v191M597.500 425v191M632 440v192M666.500 460v188M701 475v188M735.500 490v189" fill="none" stroke="#ff3030" stroke-width=".7"/>
    <path d="M493.500 380v189" stroke="#e82020"/>
    <path d="M415 351l9-6 355 154-19 12z" fill="#5a9dc4"/>
    <path d="M424 347L770 503l-11 7L415 351z" fill="url(#flange)"/>
    <path d="M415 352L760 511" stroke="#82d0ff" stroke-width="1.500"/>
    <path d="M424 313L770 468v36L424 347z" fill="url(#web)"/>
    <path d="M416 319c3-3 6-3 8-2v21l-8 2q-2-1-2-4v-12q0-4 2-5z" fill="#3ac83f"/>
    <path d="M415 311l20-10 345 159-21 11z" fill="#5c9dc2"/>
    <path d="M415 311.500L759 471.500" stroke="#78caf8" stroke-width="1.500"/>
    <path d="M759 471.500l21-11M759 510.500l20-11M770 466v38" stroke="#d01820" stroke-width="1.600"/>
    <circle cx="770" cy="485.500" r="2" fill="#e11"/><circle cx="424.500" cy="538" r="2" fill="#e11"/><circle cx="770" cy="695.500" r="2" fill="#e11"/>
    <g id="axes">
      <path d="M424.500 326l-18 9" stroke="#0e0" stroke-width="2.500"/><path d="M397 340l8-8 4 6z" fill="#0e0"/>
      <path d="M424.500 326l20 9" stroke="#b00" stroke-width="2.500"/><path d="M453 338.500l-11-.5 3-6z" fill="#c00"/>
      <path d="M424.500 326v27" stroke="#00d" stroke-width="3"/><path d="M424.500 360l-3-10h6z" fill="#00a"/>
      <circle cx="424.500" cy="326" r="3.500" fill="#ffe900"/>
    </g>
    <use href="#axes" x="-78" y="474"/>
    <g class="axis">
      <text x="386" y="346" fill="#0d0">Y</text><text x="456" y="347" fill="#e00">X</text><text x="420" y="374" fill="#11e">Z</text>
      <text x="308" y="821" fill="#0d0">Y</text><text x="378" y="821" fill="#e00">X</text><text x="342" y="848" fill="#11e">Z</text>
      <text x="410" y="550" fill="#f00">0.027</text><text x="755" y="709" fill="#f00">0.027</text>
    </g>
    <g class="cube">
      <path d="M860 122.300l49.700 23.400-48 22.600-49.400-22.600z" fill="#c4c4c4"/>
      <path d="M812.300 145.700l49.400 22.600v61l-49.400-23.600z" fill="#d2d2d2"/>
      <path d="M909.700 145.700l-48 22.600v61l48-23.600z" fill="#cecece"/>
      <path d="M860 122.300l49.700 23.400v60l-48 23.600-49.400-23.600v-60zM812.300 145.700l49.400 22.600 48-22.600M861.700 168.300v61" fill="none" stroke="#222"/>
      <path d="M825 140l49.300 22.300v60M849.300 128.300l48 23v60M871.700 128.300L825 151.700v60M896.700 139.700l-47.400 22.600v61M812.300 162l49.400 22 48-22M812.300 191.700l49.400 21.600 48-21.600" fill="none" stroke="#161616" stroke-width="1.700"/>
      <text x="852" y="152" fill="#7d7de0">+Z</text><text x="832" y="193" fill="#72ca72">-Y</text><text x="879" y="192" fill="#e07878">-X</text>
    </g>
  </svg>
  <p class="caption">BS1 - GZT (STR/GEO) - Ständig und vorübergehend - Gl. 6.10<br>Statische Analyse<br>Wölbung ω [1/m]</p>
  <p class="caption foot">max ω : 0.027 | min ω : 0.027 1/m</p>
</section>

<aside class="panel">
  <div class="dockhead"><h2>Steuerpanel</h2><button aria-label="Abdocken"><svg><use href="#restore"/></svg></button><button aria-label="Schließen"><svg><use href="#close"/></svg></button></div>
  <div class="panelbox">
    <p class="phead">Anzeigefaktoren<br>Ergebnisse</p>
    <div class="gridwrap">
    <table class="grid">
      <colgroup><col class="cg"><col><col class="cv"><col class="ca"></colgroup>
      <tbody>
      <tr class="cat"><td><i class="minus"></i></td><th colspan="3">Allgemein</th></tr>
      <tr class="last"><td></td><th>Verformungen</th><td>3.71</td><td><i class="mark"></i></td></tr>
      <tr class="gapr"><td></td><td colspan="3"></td></tr>
      <tr class="cat"><td><i class="minus"></i></td><th colspan="3">Knotenweise</th></tr>
      <tr><td></td><th>Reaktionskräfte</th><td>1.00</td><td></td></tr>
      <tr><td></td><th>Reaktionsmomente</th><td>1.00</td><td></td></tr>
      <tr><td></td><th>Kraftverteilung</th><td>1.00</td><td></td></tr>
      <tr class="last"><td></td><th>Momentenverteilung</th><td>1.00</td><td></td></tr>
      <tr class="gapr"><td></td><td colspan="3"></td></tr>
      <tr class="cat end"><td><i class="minus"></i></td><th colspan="3">Stabweise</th></tr>
      <tr><td></td><th>Verformungen</th><td>1.00</td><td></td></tr>
      <tr><td></td><th>Wölbkrafttorsion</th><td>10.00</td><td><i class="mark"></i></td></tr>
      <tr><td></td><th>Kräfte</th><td class="focus">1.00</td><td></td></tr>
      <tr><td></td><th>Momente</th><td>1.00</td><td></td></tr>
      <tr class="last"><td></td><th>Dehnungen</th><td>1.00</td><td></td></tr>
      </tbody>
    </table>
    </div>
    <div class="tabs">
      <button class="sel" aria-label="Faktoren"><svg><use href="#i-balance"/></svg></button>
      <button aria-label="Filter"><svg><use href="#i-pick"/></svg></button>
    </div>
  </div>
</aside>

<svg class="callout" viewBox="0 108 1200 769" preserveAspectRatio="xMinYMin meet" aria-hidden="true">
  <g class="shade"><path d="M141 465L399 517" stroke="#e84a42" stroke-width="5"/><path d="M400 507l16 11-20 7z" fill="#e84a42" stroke="#e84a42"/></g>
  <path d="M45.500 452.500h95v19h-95z" fill="none" stroke="#e84a42" stroke-width="3"/>
</svg>
</main>

<footer class="status">
  <div class="snaps"><button class="in">FANG</button><button>RASTER</button><button class="in">LRASTER</button><button class="in">OFANG</button></div>
  <span class="c1"></span><span class="c2">KS: Global XYZ</span><span class="c3">Ebene: XY</span><span class="c4">X: 0.638 m</span><span class="c4">Y: -1.745 m</span><span class="c4">Z: 0.000 m</span>
  <span class="sizer"><svg viewBox="0 0 9 9"><path d="M6 0h2v2H6zM3 3h2v2H3zM6 3h2v2H6zM0 6h2v2H0zM3 6h2v2H3zM6 6h2v2H6z" fill="#b8b8b8"/></svg></span>
</footer>
</div>
</body>
</html>
```
FILE: styles.css
```css
* { box-sizing: border-box; }
html, body { height: 100%; }
body { margin: 0; font: 11px/16px "Noto Sans", "Open Sans", sans-serif; color: #000; background: #f7f7f7; }
button { font: inherit; color: inherit; border: 0; padding: 0; background: none; }
h1, h2, p, ul { margin: 0; padding: 0; font: inherit; }
ul { list-style: none; }
svg { display: block; }
.defs { position: absolute; width: 0; height: 0; }

.window { display: flex; flex-direction: column; height: 100vh; overflow: hidden; border: 1px solid #1979ca; border-top: 2px solid #0b3663; border-right: 0; }

.titlebar { display: flex; align-items: center; flex: none; height: 30px; padding-left: 7px; background: #fff; }
.logo { width: 18px; height: 18px; margin-right: 4px; }
.titlebar h1 { flex: 1; white-space: nowrap; }
.winbtns { display: flex; }
.winbtns button { display: grid; place-items: center; width: 46px; height: 28px; }
.winbtns svg { width: 12px; height: 12px; }

.menubar { display: flex; align-items: center; flex: none; height: 20px; white-space: nowrap; }
.mdi { width: 16px; height: 12px; }
.menubar > button { padding: 0 8px; }
.license { margin-left: auto; padding-right: 6px; }
.mdibtns { display: flex; gap: 2px; }
.mdibtns button { display: grid; place-items: center; width: 17px; height: 18px; background: #fff; border: 1px solid #ddd; }
.mdibtns svg { width: 10px; height: 10px; }

.toolbar { display: flex; align-items: center; flex: none; gap: 2px; height: 28px; padding-left: 2px; border-top: 1px solid #dadada; overflow: hidden; }
.second { padding-bottom: 2px; }
.toolbar > * { flex: none; }
.grip { width: 3px; height: 18px; margin: 0 1px 0 2px; background: repeating-linear-gradient(#bdbdbd 0 2px, transparent 2px 4px); }
.sep { width: 1px; height: 18px; margin: 0 2px; background: #cfcfcf; }
.line { width: 1px; height: 28px; background: #d4d4d4; }
.tb { display: grid; place-items: center; width: 24px; height: 23px; }
.tb svg { width: 19px; height: 19px; }
.on { background: #c7e3f8; box-shadow: inset 0 0 0 1px #8cc5f0; }
.dd { display: grid; place-items: center; width: 12px; height: 23px; margin-left: -2px; }
.dd svg { width: 7px; height: 5px; }
.off { opacity: .55; }
.more { width: 10px; font-size: 14px; color: #444; }
.gap { margin-left: 10px; }
.combo { display: flex; align-items: center; height: 22px; background: #e8e8f2; white-space: nowrap; text-align: left; }
.grow { flex: 1; }
.lc { width: 133px; padding: 0 3px 0 5px; }
.tag { width: 30px; height: 13px; margin-right: 5px; line-height: 13px; text-align: center; color: #fff; background: #c96464; }
.split { width: 1px; height: 16px; margin-right: 6px; background: #fff; }
.chev { width: 11px; height: 8px; margin-left: 4px; }
.cs { width: 120px; padding: 0 4px 0 5px; }
.swatch { width: 11px; height: 11px; margin-right: 6px; background: #ccffff; }
.step { display: grid; place-items: center; width: 14px; height: 20px; background: #e8e8f2; }
.step svg { width: 5px; height: 8px; }
.grey { background: #d0d0d0; color: #555; }

.main { position: relative; display: flex; flex: 1; gap: 4px; min-height: 0; }
.dockhead { display: flex; align-items: center; flex: none; height: 21px; padding: 0 3px 0 6px; background: #d8e6f2; }
.dockhead h2 { flex: 1; font-weight: 600; color: #444; }
.dockhead button { display: grid; place-items: center; width: 18px; height: 18px; margin-left: 3px; }
.dockhead svg { width: 10px; height: 10px; }

.navigator { display: flex; flex-direction: column; flex: none; width: 282px; padding-bottom: 1px; }
.navbox { display: flex; flex-direction: column; flex: 1; min-height: 0; margin: 1px 0 0 1px; border: 2px solid #c9c9d4; border-bottom-width: 1px; background: #f7f7f7; }
.picker { display: flex; gap: 2px; padding: 2px 0 9px 2px; }
.wide { flex: 1; padding: 0 7px 0 5px; }
.picker .step { height: 22px; }
.picon { width: 14px; height: 14px; margin-right: 5px; }
.tree { background: #fff; overflow: hidden; }
.tree li { position: relative; height: 18px; padding-left: 21px; }
.tree .d1 { padding-left: 41px; }
.tree .d2 { padding-left: 61px; }
.tree label { display: flex; align-items: center; width: max-content; height: 18px; }
.tree label svg { width: 17px; height: 17px; margin: 0 4px 0 5px; }
.tree span { padding-top: 2px; white-space: nowrap; }
.tree b { font-family: "DejaVu Sans", sans-serif; font-weight: 400; line-height: 1; }
.tree small { font-size: 9px; color: #567; }
.tree input { appearance: none; display: grid; place-items: center; width: 13px; height: 13px; margin: 0; border: 1px solid #333; background: #fff; }
.tree input[type=radio] { border-radius: 50%; }
.tree input[type=radio]:checked::before { content: ""; width: 7px; height: 7px; border-radius: 50%; background: #222; }
.tree input[type=checkbox]:checked::before { content: ""; width: 9px; height: 4px; margin-bottom: 3px; border: solid #333; border-width: 0 0 1px 1px; transform: rotate(-45deg); }
.tree .part { background: #cce4f7; border-color: #2066a0; }
.open::before, .shut::before { content: ""; position: absolute; width: 6px; height: 6px; margin: 4px 0 0 -15px; border: solid #444; border-width: 0 2px 2px 0; transform: rotate(45deg); }
.shut::before { margin: 6px 0 0 -17px; border-color: #a0a0a0; transform: rotate(-45deg); }
.upper { flex: 2; min-height: 0; margin-bottom: 5px; }
.lowerwrap { display: flex; flex: 1; min-height: 226px; background: #fff; }
.lower { flex: 1; height: 226px; }
.scroll { display: flex; flex-direction: column; align-items: center; width: 16px; margin-right: 1px; padding: 5px 0; background: #f0f0f0; }
.scroll svg { width: 11px; height: 8px; }
.thumb { width: 15px; height: 109px; margin: 4px 0 auto; background: #cdcdcd; }
.tabs { display: flex; flex: none; height: 26px; align-items: flex-start; background: #f7f7f7; }
.tabs button { display: grid; place-items: center; width: 38px; height: 24px; border: solid #c9c9d4; border-width: 1px 1px 2px 0; background: #ececec; }
.tabs svg { width: 17px; height: 17px; }
.tabs .eyeicon { width: 13px; height: 11px; }
.tabs .sel { height: 26px; background: #fff; border-top: 0; }

.view { position: relative; flex: 1; min-width: 0; margin: 1px 0; background: #fff; }
.scene { width: 100%; height: 100%; font-size: 10px; }
.axis { font-size: 11px; }
.cube { font-size: 11px; font-weight: 700; }
.caption { position: absolute; left: 5px; top: 3px; line-height: 17px; }
.foot { top: auto; bottom: 4px; }

.panel { display: flex; flex-direction: column; flex: none; width: 267px; padding-bottom: 1px; }
.panelbox { display: flex; flex-direction: column; flex: 1; margin-top: 1px; border: solid #c9c9d4; border-width: 1px 0 0 1px; background: #fff; }
.phead { padding: 4px 10px 11px; line-height: 13px; }
.gridwrap { flex: 1; background: linear-gradient(90deg, #e0e0e0 19px, #fff 19px); }
.grid { width: 100%; border-collapse: collapse; table-layout: fixed; line-height: 16px; }
.cg { width: 19px; } .cv { width: 68px; } .ca { width: 23px; }
.grid th, .grid td { height: 16px; padding: 0; font-weight: 400; text-align: left; }
.grid tr > :first-child { background: linear-gradient(90deg, transparent 9px, #bbb 9px 10px, transparent 10px) #e0e0e0; }
.end ~ tr > :first-child, .grid .end > :first-child { background: #e0e0e0; }
.cat th { padding-left: 4px; background: #e0e0e0; }
.grid tr:not(.cat) th { position: relative; padding-left: 24px; background: #f9faf4; }
.grid tr:not(.cat) th::before { content: ""; position: absolute; left: 10px; top: 8px; width: 11px; border-top: 1px dotted #999; }
.grid tr:not(.cat) th::after { content: ""; position: absolute; left: 10px; top: 0; height: 16px; border-left: 1px dotted #999; }
.grid .last th::after { height: 8px; }
.grid td:nth-child(3) { padding-right: 3px; text-align: right; background: #fff; border: solid #dcdcdc; border-width: 0 1px; }
.grid td:nth-child(4) { padding-left: 7px; background: #f9faf4; }
.gapr td:nth-child(2) { background: #fff; }
.grid .focus { outline: 1px dotted #000; outline-offset: -1px; }
.minus { display: block; width: 9px; height: 9px; margin-left: 5px; border: 1px solid #777; background: linear-gradient(#444, #444) center / 5px 1px no-repeat #f4f4f4; }
.mark { display: block; width: 0; border: solid transparent; border-width: 4px 7px 4px 0; border-right-color: #e00; }
.panel .tabs button { width: 39px; }
.panel .tabs { border-top: 1px solid #c9c9d4; }
.panel .tabs .sel { margin-top: -1px; }

.callout { position: absolute; left: -1px; top: 0; width: 1200px; height: auto; pointer-events: none; }
.shade { filter: drop-shadow(2px 3px 2px rgba(0, 0, 0, .5)); }

.status { display: flex; align-items: center; flex: none; height: 22px; padding: 1px 0 0 325px; white-space: nowrap; }
.snaps { display: flex; flex: 1; gap: 2px; }
.snaps button { height: 18px; padding: 0 3px; border: 1px solid transparent; }
.snaps .in { background: #eee; border-color: #c4c4c4 #fff #fff #c4c4c4; }
.status > span { height: 18px; padding-left: 4px; border-left: 1px solid #cfcfcf; }
.c1 { width: 106px; } .c2 { width: 156px; } .c3 { width: 66px; } .c4 { width: 76px; }
.status .sizer { display: flex; align-items: end; width: 18px; padding-left: 7px; }
.sizer svg { width: 9px; height: 9px; }
```
